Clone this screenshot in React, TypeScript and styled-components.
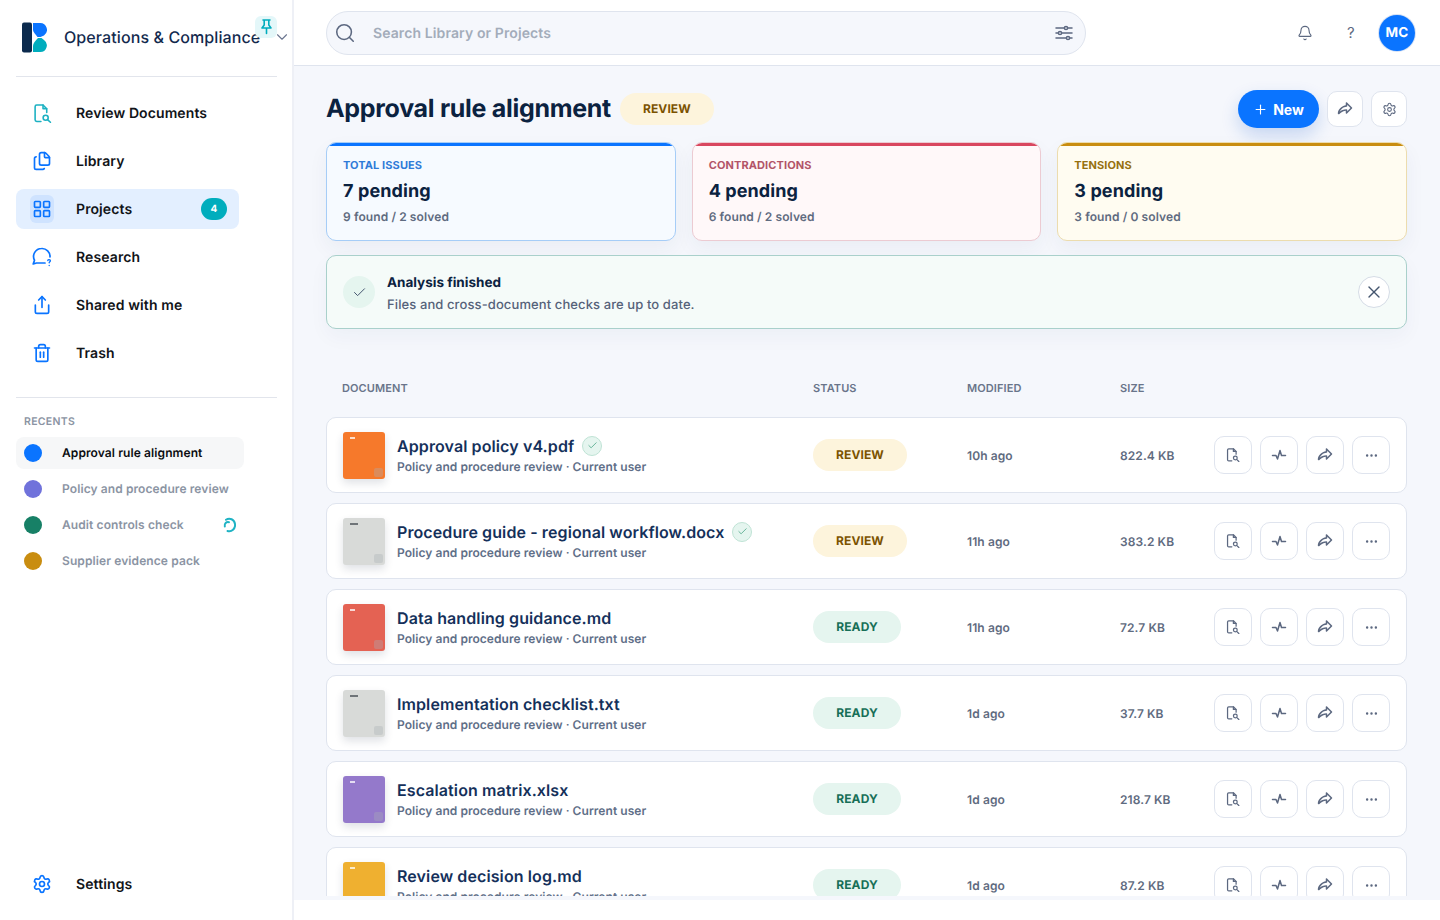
import { ReactNode } from "react";
import styled, { createGlobalStyle } from "styled-components";
import {
  Bell,
  Check,
  ChevronDown,
  Ellipsis,
  Files,
  LayoutGrid,
  Plus,
  Search,
  Settings,
  Share,
  Trash2,
  X,
} from "lucide-react";
import { PiShareFatBold } from "react-icons/pi";

const GlobalStyle = createGlobalStyle`
  html, body {
    margin: 0;
    padding: 0;
    background: #fff;
    font-family: Inter, "Noto Sans", sans-serif;
    text-rendering: geometricPrecision;
    letter-spacing: 0.1px;
    overflow: hidden;
  }
  * { box-sizing: border-box; }
`;

const Page = styled.div`
  display: flex;
  width: 1440px;
  height: 920px;
`;

const Sidebar = styled.aside`
  width: 294px;
  height: 920px;
  flex-shrink: 0;
  border-right: 2px solid #eef0f6;
  padding: 0 16px;
  display: flex;
  flex-direction: column;
`;

const Brand = styled.div`
  position: relative;
  height: 77px;
  width: 261px;
  border-bottom: 1px solid #e2e5ec;
  display: flex;
  align-items: center;
  padding: 0 0 2px 5px;
  flex-shrink: 0;
`;

const BrandName = styled.span`
  margin-left: 17px;
  font-size: 16px;
  font-weight: 500;
  color: #12294d;
  white-space: nowrap;
`;

const PinBadge = styled.span`
  position: absolute;
  left: 239px;
  top: 16px;
  width: 22px;
  height: 22px;
  border-radius: 6px;
  background: #e4f7f9;
  display: flex;
  align-items: center;
  justify-content: center;
`;

const BrandCaret = styled.span`
  position: absolute;
  left: 257px;
  top: 28px;
  color: #6b7690;
  display: flex;
`;

const Nav = styled.nav`
  display: flex;
  flex-direction: column;
  gap: 8px;
  padding-top: 16px;
`;

const NavRow = styled.div<{ $active?: boolean }>`
  width: 223px;
  height: 40px;
  border-radius: 8px;
  display: flex;
  align-items: center;
  padding: 0 12px 0 14px;
  background: ${({ $active }) => ($active ? "#e3efff" : "transparent")};
`;

const NavIcon = styled.span<{ $active?: boolean }>`
  width: 24px;
  height: 28px;
  border-radius: 6px;
  display: flex;
  align-items: center;
  justify-content: center;
  background: ${({ $active }) => ($active ? "#cfe3ff" : "transparent")};
  color: #0a74ff;
`;

const NavLabel = styled.span`
  margin: 2px 0 0 22px;
  font-size: 14px;
  line-height: 18px;
  font-weight: 600;
  color: #111418;
  flex: 1;
`;

const Count = styled.span`
  width: 26px;
  height: 22px;
  border-radius: 11px;
  background: #00adbd;
  color: #fff;
  font-size: 10px;
  font-weight: 700;
  display: flex;
  align-items: center;
  justify-content: center;
`;

const Divider = styled.div`
  width: 261px;
  height: 1px;
  background: #e2e5ec;
  margin-top: 24px;
`;

const RecentsTitle = styled.div`
  margin: 17px 0 0 8px;
  font-size: 10.5px;
  line-height: 13px;
  font-weight: 600;
  letter-spacing: 0.3px;
  color: #8b94a3;
`;

const RecentList = styled.div`
  display: flex;
  flex-direction: column;
  gap: 4px;
  margin-top: 9px;
`;

const RecentRow = styled.div<{ $active?: boolean }>`
  position: relative;
  width: 228px;
  height: 32px;
  border-radius: 8px;
  display: flex;
  align-items: center;
  padding-left: 8px;
  background: ${({ $active }) => ($active ? "#f6f7f8" : "transparent")};
`;

const Dot = styled.span<{ $color: string }>`
  width: 18px;
  height: 18px;
  border-radius: 50%;
  background: ${({ $color }) => $color};
`;

const RecentLabel = styled.span<{ $active?: boolean }>`
  margin: 0 0 2px 20px;
  font-size: 12px;
  font-weight: 600;
  color: ${({ $active }) => ($active ? "#0b0d11" : "#8b94a3")};
`;

const Spinner = styled.svg`
  position: absolute;
  left: 206px;
  top: 8px;
`;

const SidebarFoot = styled.div`
  margin-top: auto;
  padding-bottom: 16px;
`;

const Main = styled.div`
  width: 1146px;
  height: 900px;
  display: flex;
  flex-direction: column;
  background: #f5f7fc;
`;

const TopBar = styled.header`
  height: 66px;
  flex-shrink: 0;
  background: #fff;
  border-bottom: 1px solid #dfe4ee;
  padding: 0 25px 0 32px;
  display: flex;
  align-items: center;
`;

const SearchBox = styled.div`
  width: 760px;
  height: 44px;
  border-radius: 22px;
  border: 1px solid #dfe4ee;
  background: #f5f7fc;
  display: flex;
  align-items: center;
  padding: 0 12px 0 7px;
  color: #5c6880;
`;

const SearchText = styled.span`
  margin: 2px 0 0 17px;
  flex: 1;
  font-size: 14px;
  font-weight: 600;
  color: #a3acba;
`;

const TopIcons = styled.div`
  margin-left: auto;
  display: flex;
  align-items: center;
  color: #5c6880;
`;

const Help = styled.span`
  margin-left: 30px;
  width: 16px;
  text-align: center;
  font-size: 15px;
  color: #5c6880;
`;

const Avatar = styled.div`
  margin-left: 20px;
  width: 36px;
  height: 36px;
  border-radius: 50%;
  background: #0a74ff;
  box-shadow: 0 0 0 1px #d6e2f5;
  color: #fff;
  font-size: 13.5px;
  font-weight: 700;
  display: flex;
  align-items: center;
  justify-content: center;
`;

const Content = styled.main`
  height: 830px;
  overflow: hidden;
  padding: 24px 33px 0 32px;
`;

const TitleRow = styled.div`
  height: 38px;
  display: flex;
  align-items: center;
`;

const Title = styled.h1`
  margin: -1px 0 0;
  font-size: 25px;
  font-weight: 700;
  letter-spacing: -0.3px;
  color: #0b2240;
`;

const Pill = styled.span<{ $ready?: boolean; $width: number }>`
  width: ${({ $width }) => $width}px;
  height: 32px;
  padding-bottom: 1px;
  border-radius: 16px;
  display: flex;
  align-items: center;
  justify-content: center;
  font-size: 12px;
  font-weight: 700;
  background: ${({ $ready }) => ($ready ? "#e5f5ef" : "#fdf4dc")};
  color: ${({ $ready }) => ($ready ? "#176f57" : "#7b5200")};
`;

const TitlePill = styled(Pill)`
  margin-left: 9px;
`;

const TitleActions = styled.div`
  margin-left: auto;
  display: flex;
  align-items: center;
  gap: 8px;
`;

const NewButton = styled.button`
  width: 81px;
  height: 38px;
  border: 0;
  border-radius: 19px;
  background: #0a74ff;
  color: #fff;
  font: 700 14px Inter, sans-serif;
  display: flex;
  align-items: center;
  justify-content: center;
  gap: 5px;
  box-shadow: 0 8px 18px rgba(10, 80, 200, 0.2);
`;

const SquareButton = styled.button<{ $small?: boolean }>`
  width: ${({ $small }) => ($small ? 36 : 38)}px;
  height: ${({ $small }) => ($small ? 36 : 38)}px;
  border: 1px solid #dfe4ee;
  border-radius: 10px;
  background: #fff;
  color: #5c6880;
  padding: 0;
  display: flex;
  align-items: center;
  justify-content: center;
`;

const Cards = styled.section`
  display: grid;
  grid-template-columns: repeat(3, 1fr);
  gap: 16px;
  margin-top: 14px;
`;

const Card = styled.div<{ $bg: string; $border: string }>`
  height: 99px;
  border-radius: 10px;
  border: 1px solid ${({ $border }) => $border};
  background: ${({ $bg }) => $bg};
  overflow: hidden;
  box-shadow: 0 8px 20px rgba(30, 50, 90, 0.05);
`;

const CardStripe = styled.div<{ $color: string }>`
  height: 4px;
  margin-top: -1px;
  background: ${({ $color }) => $color};
`;

const CardBody = styled.div`
  padding: 12px 16px 0;
`;

const CardLabel = styled.div<{ $color: string }>`
  font-size: 11px;
  line-height: 14px;
  font-weight: 700;
  color: ${({ $color }) => $color};
`;

const CardValue = styled.div`
  margin-top: 7px;
  font-size: 18px;
  line-height: 26px;
  font-weight: 650;
  color: #0b2240;
`;

const CardNote = styled.div`
  margin-top: 4px;
  font-size: 12px;
  line-height: 16px;
  font-weight: 600;
  color: #5f6b80;
`;

const Banner = styled.div`
  position: relative;
  margin-top: 14px;
  height: 74px;
  border-radius: 10px;
  border: 1px solid #a9d0cb;
  background: #f5fbf9;
  display: flex;
  align-items: center;
  padding: 0 16px;
  box-shadow: 0 8px 20px rgba(30, 50, 90, 0.04);
`;

const BannerIcon = styled.span`
  width: 32px;
  height: 32px;
  border-radius: 50%;
  background: #e5f5ef;
  color: #45566f;
  display: flex;
  align-items: center;
  justify-content: center;
`;

const BannerText = styled.div`
  margin: 3px 0 0 12px;
`;

const BannerTitle = styled.div`
  font-size: 13.5px;
  line-height: 20px;
  font-weight: 700;
  letter-spacing: 0;
  color: #0b2240;
`;

const BannerNote = styled.div`
  margin-top: 2px;
  font-size: 13px;
  line-height: 20px;
  font-weight: 500;
  color: #55627a;
`;

const CloseButton = styled.span`
  margin-left: auto;
  width: 32px;
  height: 32px;
  border-radius: 50%;
  border: 1px solid #d5dce6;
  background: #fff;
  color: #45566f;
  display: flex;
  align-items: center;
  justify-content: center;
`;

const TableHead = styled.div`
  display: grid;
  grid-template-columns: 471px 154px 153px 94px 1fr;
  padding: 0 16px;
  margin-top: 52px;
  height: 14px;
  font-size: 11px;
  line-height: 14px;
  font-weight: 600;
  color: #69748a;
`;

const Rows = styled.div`
  display: flex;
  flex-direction: column;
  gap: 10px;
  margin-top: 22px;
`;

const Row = styled.div`
  flex-shrink: 0;
  height: 76px;
  border-radius: 10px;
  border: 1px solid #dfe4ee;
  background: #fff;
  display: grid;
  grid-template-columns: 470px 154px 153px 94px 1fr;
  align-items: center;
  padding: 0 16px;
`;

const DocCell = styled.div`
  display: flex;
  align-items: center;
`;

const Thumb = styled.div<{ $color: string }>`
  position: relative;
  width: 42px;
  height: 47px;
  border-radius: 3px;
  background: ${({ $color }) => $color};
  box-shadow: 0 4px 8px rgba(30, 40, 70, 0.14);
  flex-shrink: 0;
`;

const ThumbMark = styled.span`
  position: absolute;
  left: 7px;
  top: 5px;
  width: 5px;
  height: 2px;
  background: rgba(255, 255, 255, 0.75);
`;

const ThumbGreyMark = styled(ThumbMark)`
  width: 8px;
  background: #6f7478;
`;

const ThumbCorner = styled.span`
  position: absolute;
  right: 2px;
  bottom: 2px;
  width: 9px;
  height: 9px;
  border-radius: 2px;
  background: rgba(170, 175, 180, 0.35);
`;

const DocText = styled.div`
  margin-left: 12px;
  padding-bottom: 1px;
`;

const DocNameLine = styled.div`
  display: flex;
  align-items: center;
  gap: 8px;
`;

const DocName = styled.div`
  font-size: 16px;
  line-height: 22px;
  font-weight: 600;
  color: #14305a;
  white-space: nowrap;
`;

const Verified = styled.span`
  width: 20px;
  height: 20px;
  border-radius: 50%;
  background: #e5f5ef;
  border: 1px solid #bfe3d5;
  color: #4fa889;
  display: flex;
  align-items: center;
  justify-content: center;
`;

const DocMeta = styled.div`
  margin-top: 2px;
  font-size: 12px;
  line-height: 16px;
  font-weight: 600;
  letter-spacing: 0.05px;
  color: #5f6f88;
  white-space: nowrap;
`;

const Cell = styled.div`
  font-size: 12px;
  font-weight: 600;
  color: #5f6b80;
`;

const RowActions = styled.div`
  display: flex;
  justify-content: flex-end;
  gap: 8px;
`;

const Logo = () => (
  <svg width="26" height="31" viewBox="0 0 26 31">
    <rect x="1" y="0.5" width="10" height="30" rx="2" fill="#0b2a4d" />
    <path d="M12 1h7a6.8 6.8 0 0 1 4 12.4L19.500 15H16.500C14.500 12 12 10 12 8Z" fill="#0a74ff" />
    <path d="M12 30V24c0-3 2.500-5 5-8h3.500l2.500 2a6.600 6.600 0 0 1-4 12Z" fill="#00adbd" />
  </svg>
);

const PinIcon = () => (
  <svg width="13" height="16" viewBox="0 0 13 16" fill="none" stroke="#00adbd" strokeWidth="1.6" strokeLinejoin="round" strokeLinecap="round">
    <path d="M3 1h7M4.200 1v5L2 9h9L8.800 6V1M6.500 9v5.500" />
  </svg>
);

const DocSearchIcon = ({ size, color, width }: { size: number; color: string; width: number }) => (
  <svg width={size} height={size} viewBox="0 0 18 18" fill="none" stroke={color} strokeWidth={width} strokeLinecap="round" strokeLinejoin="round">
    <path d="M7.500 16.500H3.500a1.500 1.500 0 0 1-1.500-1.500V2.500A1.500 1.500 0 0 1 3.500 1H9.500l3.500 3.500V8" />
    <path d="M9.500 1v3.500H13" />
    <circle cx="12" cy="13" r="2.400" />
    <path d="M14 15l2.500 2.300" />
  </svg>
);

const PulseIcon = () => (
  <svg width="16" height="16" viewBox="0 0 16 16" fill="none" stroke="#5c6880" strokeWidth="1.500" strokeLinecap="round" strokeLinejoin="round">
    <path d="M1.500 8.500H5l1.500 3.500L9 3.500l1.500 5h4" />
  </svg>
);

const ResearchIcon = () => (
  <svg width="21" height="20" viewBox="0 0 21 20" fill="none" stroke="#0a74ff" strokeWidth="1.700" strokeLinecap="round" strokeLinejoin="round">
    <path d="M13 16H4.500L1.200 17l1.300-3.800A8 8 0 0 1 9.500 1.500a8 8 0 0 1 8.500 8.500" />
    <path d="M15.800 13.500c.2-1.200 2.600-1.200 2.600.2 0 1-1.200 1-1.200 2M17.200 18.500v.1" strokeWidth="1.400" />
  </svg>
);

const SlidersIcon = () => (
  <svg width="18" height="16" viewBox="0 0 18 16" fill="none" stroke="#5c6880" strokeWidth="1.500" strokeLinecap="round">
    <path d="M1 3h8.400M12.600 3H17M1 8h2.400M6.600 8H17M1 13h10.400M14.600 13H17" />
    <circle cx="11" cy="3" r="1.600" />
    <circle cx="5" cy="8" r="1.600" />
    <circle cx="13" cy="13" r="1.600" />
  </svg>
);

const navItems: { label: string; icon: ReactNode }[] = [
  { label: "Review Documents", icon: <DocSearchIcon size={19} color="#1cb1c2" width={1.5} /> },
  { label: "Library", icon: <Files size={20} strokeWidth={2} /> },
  { label: "Projects", icon: <LayoutGrid size={20} strokeWidth={2} /> },
  { label: "Research", icon: <ResearchIcon /> },
  { label: "Shared with me", icon: <Share size={20} strokeWidth={2} /> },
  { label: "Trash", icon: <Trash2 size={20} strokeWidth={2} /> },
];

const recents = [
  { label: "Approval rule alignment", color: "#0a74ff" },
  { label: "Policy and procedure review", color: "#7072db" },
  { label: "Audit controls check", color: "#178066" },
  { label: "Supplier evidence pack", color: "#c98d10" },
];

const cards = [
  { label: "TOTAL ISSUES", value: "7 pending", note: "9 found / 2 solved", bg: "#f6faff", border: "#a6cdf7", top: "#0a74ff", text: "#2f7bd8" },
  { label: "CONTRADICTIONS", value: "4 pending", note: "6 found / 2 solved", bg: "#fff8f9", border: "#eccbd2", top: "#d9475f", text: "#b25468" },
  { label: "TENSIONS", value: "3 pending", note: "3 found / 0 solved", bg: "#fffcf1", border: "#ecdcae", top: "#c98d10", text: "#96700f" },
];

const docs = [
  { name: "Approval policy v4.pdf", color: "#f6792b", status: "REVIEW", modified: "10h ago", size: "822.4 KB", verified: true },
  { name: "Procedure guide - regional workflow.docx", color: "#d8dad8", status: "REVIEW", modified: "11h ago", size: "383.2 KB", verified: true, grey: true },
  { name: "Data handling guidance.md", color: "#e46253", status: "READY", modified: "11h ago", size: "72.7 KB" },
  { name: "Implementation checklist.txt", color: "#d8dad8", status: "READY", modified: "1d ago", size: "37.7 KB", grey: true },
  { name: "Escalation matrix.xlsx", color: "#9479cb", status: "READY", modified: "1d ago", size: "218.7 KB" },
  { name: "Review decision log.md", color: "#efb030", status: "READY", modified: "1d ago", size: "87.2 KB" },
];

export default function App() {
  return (
    <Page>
      <GlobalStyle />
      <Sidebar>
        <Brand>
          <Logo />
          <BrandName>Operations &amp; Compliance</BrandName>
          <PinBadge>
            <PinIcon />
          </PinBadge>
          <BrandCaret>
            <ChevronDown size={18} strokeWidth={1.5} />
          </BrandCaret>
        </Brand>
        <Nav>
          {navItems.map((item) => (
            <NavRow key={item.label} $active={item.label === "Projects"}>
              <NavIcon $active={item.label === "Projects"}>{item.icon}</NavIcon>
              <NavLabel>{item.label}</NavLabel>
              {item.label === "Projects" && <Count>4</Count>}
            </NavRow>
          ))}
        </Nav>
        <Divider />
        <RecentsTitle>RECENTS</RecentsTitle>
        <RecentList>
          {recents.map((item, i) => (
            <RecentRow key={item.label} $active={i === 0}>
              <Dot $color={item.color} />
              <RecentLabel $active={i === 0}>{item.label}</RecentLabel>
              {i === 2 && (
                <Spinner width="14" height="16" viewBox="0 0 14 16" fill="none" stroke="#1fb3c4" strokeWidth="2" strokeLinecap="round">
                  <path d="M4 2.800A5.800 6.300 0 1 1 5.500 14" />
                  <path d="M2.800 9.500C2 6.500 4.500 4.500 7 5.200" />
                </Spinner>
              )}
            </RecentRow>
          ))}
        </RecentList>
        <SidebarFoot>
          <NavRow>
            <NavIcon>
              <Settings size={20} strokeWidth={2} />
            </NavIcon>
            <NavLabel>Settings</NavLabel>
          </NavRow>
        </SidebarFoot>
      </Sidebar>
      <Main>
        <TopBar>
          <SearchBox>
            <Search size={22} strokeWidth={1.7} />
            <SearchText>Search Library or Projects</SearchText>
            <SlidersIcon />
          </SearchBox>
          <TopIcons>
            <Bell size={16} strokeWidth={1.7} />
            <Help>?</Help>
            <Avatar>MC</Avatar>
          </TopIcons>
        </TopBar>
        <Content>
          <TitleRow>
            <Title>Approval rule alignment</Title>
            <TitlePill $width={94}>REVIEW</TitlePill>
            <TitleActions>
              <NewButton>
                <Plus size={15} strokeWidth={1.8} />
                New
              </NewButton>
              <SquareButton $small>
                <PiShareFatBold size={16} />
              </SquareButton>
              <SquareButton $small>
                <Settings size={15} strokeWidth={1.7} />
              </SquareButton>
            </TitleActions>
          </TitleRow>
          <Cards>
            {cards.map((card) => (
              <Card key={card.label} $bg={card.bg} $border={card.border}>
                <CardStripe $color={card.top} />
                <CardBody>
                  <CardLabel $color={card.text}>{card.label}</CardLabel>
                  <CardValue>{card.value}</CardValue>
                  <CardNote>{card.note}</CardNote>
                </CardBody>
              </Card>
            ))}
          </Cards>
          <Banner>
            <BannerIcon>
              <Check size={15} strokeWidth={1.6} />
            </BannerIcon>
            <BannerText>
              <BannerTitle>Analysis finished</BannerTitle>
              <BannerNote>Files and cross-document checks are up to date.</BannerNote>
            </BannerText>
            <CloseButton>
              <X size={20} strokeWidth={1.6} />
            </CloseButton>
          </Banner>
          <TableHead>
            <span>DOCUMENT</span>
            <span>STATUS</span>
            <span>MODIFIED</span>
            <span>SIZE</span>
          </TableHead>
          <Rows>
            {docs.map((doc) => (
              <Row key={doc.name}>
                <DocCell>
                  <Thumb $color={doc.color}>
                    {doc.grey ? <ThumbGreyMark /> : <ThumbMark />}
                    <ThumbCorner />
                  </Thumb>
                  <DocText>
                    <DocNameLine>
                      <DocName>{doc.name}</DocName>
                      {doc.verified && (
                        <Verified>
                          <Check size={11} strokeWidth={1.8} />
                        </Verified>
                      )}
                    </DocNameLine>
                    <DocMeta>Policy and procedure review · Current user</DocMeta>
                  </DocText>
                </DocCell>
                <Pill $ready={doc.status === "READY"} $width={doc.status === "READY" ? 88 : 94}>
                  {doc.status}
                </Pill>
                <Cell>{doc.modified}</Cell>
                <Cell>{doc.size}</Cell>
                <RowActions>
                  <SquareButton>
                    <DocSearchIcon size={14} color="#5c6880" width={1.6} />
                  </SquareButton>
                  <SquareButton>
                    <PulseIcon />
                  </SquareButton>
                  <SquareButton>
                    <PiShareFatBold size={16} />
                  </SquareButton>
                  <SquareButton>
                    <Ellipsis size={15} strokeWidth={1.9} />
                  </SquareButton>
                </RowActions>
              </Row>
            ))}
          </Rows>
        </Content>
      </Main>
    </Page>
  );
}
